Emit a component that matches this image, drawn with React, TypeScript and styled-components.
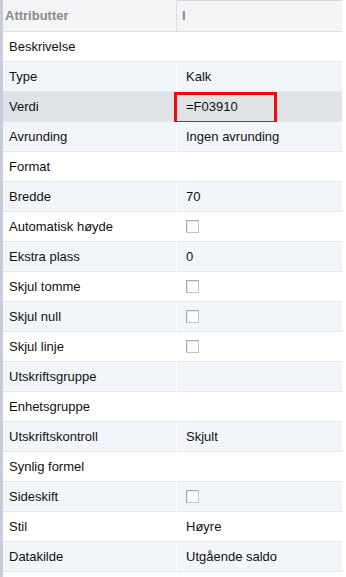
import { createGlobalStyle, styled } from "styled-components"

type Row = {
    label: string,
    value?: string,
    check?: boolean,
    selected?: boolean,
    marked?: boolean,
}

const rows: Row[] = [
    { label: "Beskrivelse" },
    { label: "Type", value: "Kalk" },
    { label: "Verdi", value: "=F03910", selected: true, marked: true },
    { label: "Avrunding", value: "Ingen avrunding" },
    { label: "Format" },
    { label: "Bredde", value: "70" },
    { label: "Automatisk høyde", check: true },
    { label: "Ekstra plass", value: "0" },
    { label: "Skjul tomme", check: true },
    { label: "Skjul null", check: true },
    { label: "Skjul linje", check: true },
    { label: "Utskriftsgruppe" },
    { label: "Enhetsgruppe" },
    { label: "Utskriftskontroll", value: "Skjult" },
    { label: "Synlig formel" },
    { label: "Sideskift", check: true },
    { label: "Stil", value: "Høyre" },
    { label: "Datakilde", value: "Utgående saldo" },
]

const Global = createGlobalStyle`
    html, body {
        margin: 0;
        background: #fff;
    }
    body {
        font-family: "Liberation Sans", Arial, sans-serif;
        font-size: 13px;
        color: #111;
    }
`

const Page = styled.div`
    width: 342px;
    min-height: 577px;
    border-left: 3px solid #c7cddb;
    box-sizing: border-box;
`

const Table = styled.div`
    display: grid;
    grid-template-columns: 174px 1fr;
    width: 339px;
`

const HeadCell = styled.div<{ $first?: boolean }>`
    height: 32px;
    line-height: 30px;
    box-sizing: border-box;
    background: #f3f4f6;
    border-bottom: 1px solid #dcdfe3;
    border-top: 1px solid ${p => (p.$first ? "#f7f8f9" : "#d6d8db")};
    border-right: ${p => (p.$first ? "1px solid #dadde1" : "none")};
    padding-left: ${p => (p.$first ? "2px" : "5px")};
    font-weight: bold;
    color: #8a8a8a;
`

const Cell = styled.div<{ $shade: string, $label?: boolean }>`
    position: relative;
    height: 30px;
    line-height: 29px;
    box-sizing: border-box;
    background: ${p => p.$shade};
    border-bottom: 1px solid #e4e7eb;
    border-right: ${p => (p.$label ? "1px solid #ffffff" : "none")};
    padding-left: ${p => (p.$label ? "6px" : "9px")};
    white-space: nowrap;
`

const Check = styled.span`
    display: inline-block;
    vertical-align: middle;
    margin-top: -3px;
    width: 13px;
    height: 13px;
    box-sizing: border-box;
    border: 1px solid #ababab;
    border-right-color: #c4c4c4;
    border-bottom-color: #c4c4c4;
    background: #fff;
    box-shadow: inset 1px 1px 0 #e6e6e6;
`

const Marker = styled.div`
    position: absolute;
    left: -3px;
    top: 0px;
    width: 103px;
    height: 32px;
    box-sizing: border-box;
    border: 3px solid #f20a0a;
    pointer-events: none;
`

function shadeFor(r: Row, i: number) {
    if (r.selected) return "#dfe2e6"
    return i % 2 === 0 ? "#ffffff" : "#f2f5f9"
}

export default function App() {
    return (<Page>
        <Global />
        <Table>
            <HeadCell $first>Attributter</HeadCell>
            <HeadCell>I</HeadCell>
            {rows.map((r, i) => {
                const shade = shadeFor(r, i)
                return (<Row key={r.label} r={r} shade={shade} />)
            })}
        </Table>
    </Page>)
}

function Row({ r, shade }: { r: Row, shade: string }) {
    return (<>
        <Cell $shade={shade} $label>{r.label}</Cell>
        <Cell $shade={shade}>
            {r.check ? <Check /> : r.value}
            {r.marked && <Marker />}
        </Cell>
    </>)
}
